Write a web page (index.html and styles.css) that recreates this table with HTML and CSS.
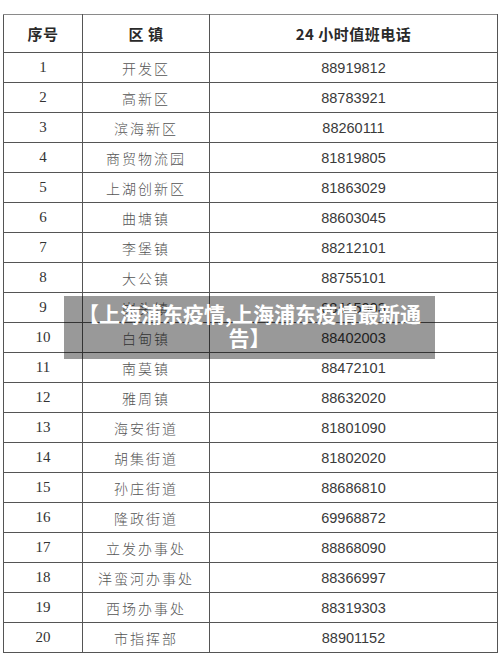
FILE: index.html
```html
<!DOCTYPE html>
<html lang="zh-CN">
<head>
<meta charset="utf-8">
<title>上海浦东疫情</title>
<link rel="stylesheet" href="styles.css">
</head>
<body>
<div class="page">
  <table class="duty">
    <colgroup>
      <col class="c-no">
      <col class="c-area">
      <col class="c-tel">
    </colgroup>
    <thead>
      <tr><th>序号</th><th>区 镇</th><th>24 小时值班电话</th></tr>
    </thead>
    <tbody>
      <tr><td class="no">1</td><td class="area">开发区</td><td class="tel">88919812</td></tr>
      <tr><td class="no">2</td><td class="area">高新区</td><td class="tel">88783921</td></tr>
      <tr><td class="no">3</td><td class="area">滨海新区</td><td class="tel">88260111</td></tr>
      <tr><td class="no">4</td><td class="area">商贸物流园</td><td class="tel">81819805</td></tr>
      <tr><td class="no">5</td><td class="area">上湖创新区</td><td class="tel">81863029</td></tr>
      <tr><td class="no">6</td><td class="area">曲塘镇</td><td class="tel">88603045</td></tr>
      <tr><td class="no">7</td><td class="area">李堡镇</td><td class="tel">88212101</td></tr>
      <tr><td class="no">8</td><td class="area">大公镇</td><td class="tel">88755101</td></tr>
      <tr><td class="no">9</td><td class="area">岗头镇</td><td class="tel">88415003</td></tr>
      <tr><td class="no">10</td><td class="area">白甸镇</td><td class="tel">88402003</td></tr>
      <tr><td class="no">11</td><td class="area">南莫镇</td><td class="tel">88472101</td></tr>
      <tr><td class="no">12</td><td class="area">雅周镇</td><td class="tel">88632020</td></tr>
      <tr><td class="no">13</td><td class="area">海安街道</td><td class="tel">81801090</td></tr>
      <tr><td class="no">14</td><td class="area">胡集街道</td><td class="tel">81802020</td></tr>
      <tr><td class="no">15</td><td class="area">孙庄街道</td><td class="tel">88686810</td></tr>
      <tr><td class="no">16</td><td class="area">隆政街道</td><td class="tel">69968872</td></tr>
      <tr><td class="no">17</td><td class="area">立发办事处</td><td class="tel">88868090</td></tr>
      <tr><td class="no">18</td><td class="area">洋蛮河办事处</td><td class="tel">88366997</td></tr>
      <tr><td class="no">19</td><td class="area">西场办事处</td><td class="tel">88319303</td></tr>
      <tr><td class="no">20</td><td class="area">市指挥部</td><td class="tel">88901152</td></tr>
    </tbody>
  </table>
  <div class="caption">【上海浦东疫情,上海浦东疫情最新通告】</div>
</div>
</body>
</html>
```

FILE: styles.css
```css
html, body {
  margin: 0;
  padding: 0;
  background: #ffffff;
}

.page {
  position: relative;
  width: 500px;
  height: 656px;
  padding: 14px 3px 0 3px;
  box-sizing: border-box;
}

.duty {
  border-collapse: collapse;
  width: 494px;
  table-layout: fixed;
  color: #333;
}

.c-no { width: 79px; }
.c-area { width: 127px; }
.c-tel { width: 288px; }

.duty th,
.duty td {
  border: 1px solid #555;
  padding: 0;
  text-align: center;
  vertical-align: middle;
}

.duty thead th {
  height: 37px;
  border-top-color: #8a8a8a;
  font-family: "Noto Sans CJK SC", "DejaVu Serif", serif;
  font-weight: 700;
  font-size: 15px;
  color: #2a2a2a;
  letter-spacing: 0.5px;
}

.duty tbody td {
  height: 29px;
}

.duty td.no {
  font-family: "Liberation Serif", serif;
  font-size: 15px;
  color: #333;
}

.duty td.area {
  font-family: "Noto Sans CJK SC", sans-serif;
  font-weight: 300;
  font-size: 14px;
  line-height: 1;
  letter-spacing: 2px;
  color: #555;
}

.duty td.tel {
  font-family: "Liberation Sans", Arial, sans-serif;
  font-size: 14.5px;
  color: #3a3a3a;
}

.caption {
  position: absolute;
  left: 64px;
  top: 296px;
  width: 371px;
  height: 63px;
  box-sizing: border-box;
  padding: 5px 12px 0 12px;
  background: rgba(0, 0, 0, 0.4);
  color: #ffffff;
  font-family: "Noto Sans CJK SC", sans-serif;
  font-weight: 700;
  font-size: 21px;
  line-height: 24px;
  text-align: center;
}
```
